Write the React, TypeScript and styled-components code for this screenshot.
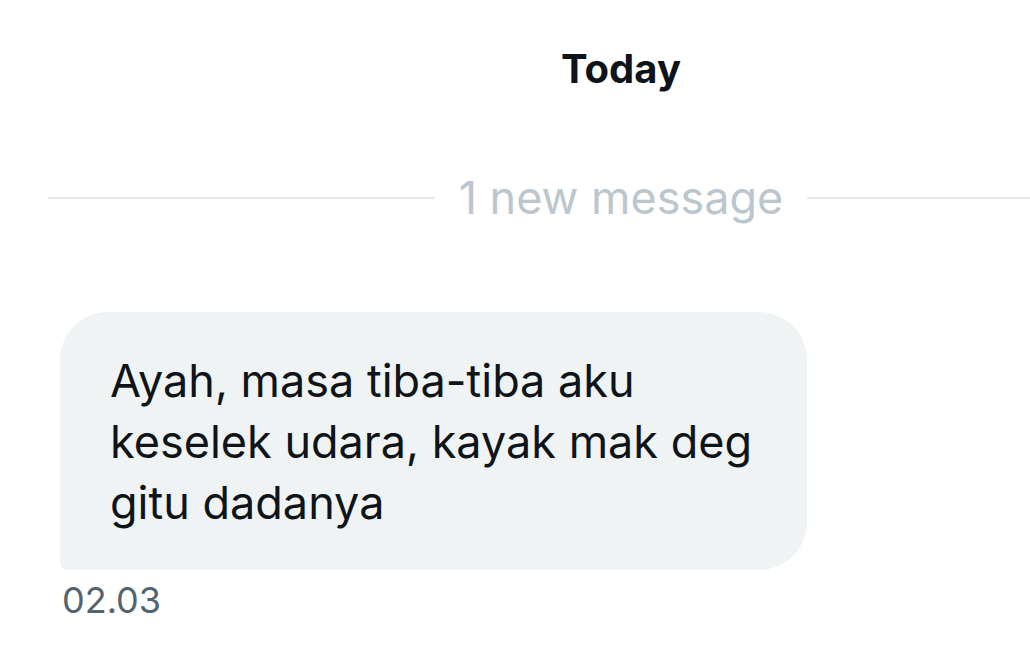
import React from "react";
import styled, { createGlobalStyle } from "styled-components";

const Global = createGlobalStyle`
  html, body { margin: 0; padding: 0; background: #ffffff; }
  body { font-family: Inter, "Noto Sans", "Liberation Sans", sans-serif; overflow: hidden; }
`;

const Page = styled.div`
  width: 1030px;
  height: 664px;
  overflow: hidden;
  background: #ffffff;
`;

const Column = styled.div`
  width: 1146px;
  margin-left: 48px;
  display: flex;
  flex-direction: column;
`;

const DayHeader = styled.div`
  text-align: center;
  font-weight: 700;
  font-size: 40px;
  line-height: 48px;
  color: #0f1419;
  padding-top: 45px;
`;

const Divider = styled.div`
  display: flex;
  align-items: center;
  margin-top: 77px;
  height: 56px;
`;

const Line = styled.div`
  flex: 1;
  height: 2px;
  background: #e4e9ec;
`;

const DividerText = styled.span`
  padding: 0 24px;
  font-size: 45px;
  color: #bcc6ce;
  line-height: 56px;
`;

const Thread = styled.div`
  padding-left: 60px;
  margin-top: 86px;
  display: flex;
  flex-direction: column;
  align-items: flex-start;
`;

const Bubble = styled.div`
  width: 747px;
  box-sizing: border-box;
  padding: 38px 50px 37px 50px;
  background: #eff3f4;
  border-radius: 48px 48px 48px 8px;
  font-size: 45px;
  line-height: 61px;
  color: #0f1419;
`;

const Time = styled.div`
  margin-top: 8px;
  margin-left: 2px;
  font-size: 36px;
  line-height: 44px;
  color: #536471;
`;

export default function App() {
  return (
    <Page>
      <Global />
      <Column>
        <DayHeader>Today</DayHeader>
        <Divider>
          <Line />
          <DividerText>1 new message</DividerText>
          <Line />
        </Divider>
      </Column>
      <Thread>
        <Bubble>Ayah, masa tiba-tiba aku keselek udara, kayak mak deg gitu dadanya</Bubble>
        <Time>02.03</Time>
      </Thread>
    </Page>
  );
}
